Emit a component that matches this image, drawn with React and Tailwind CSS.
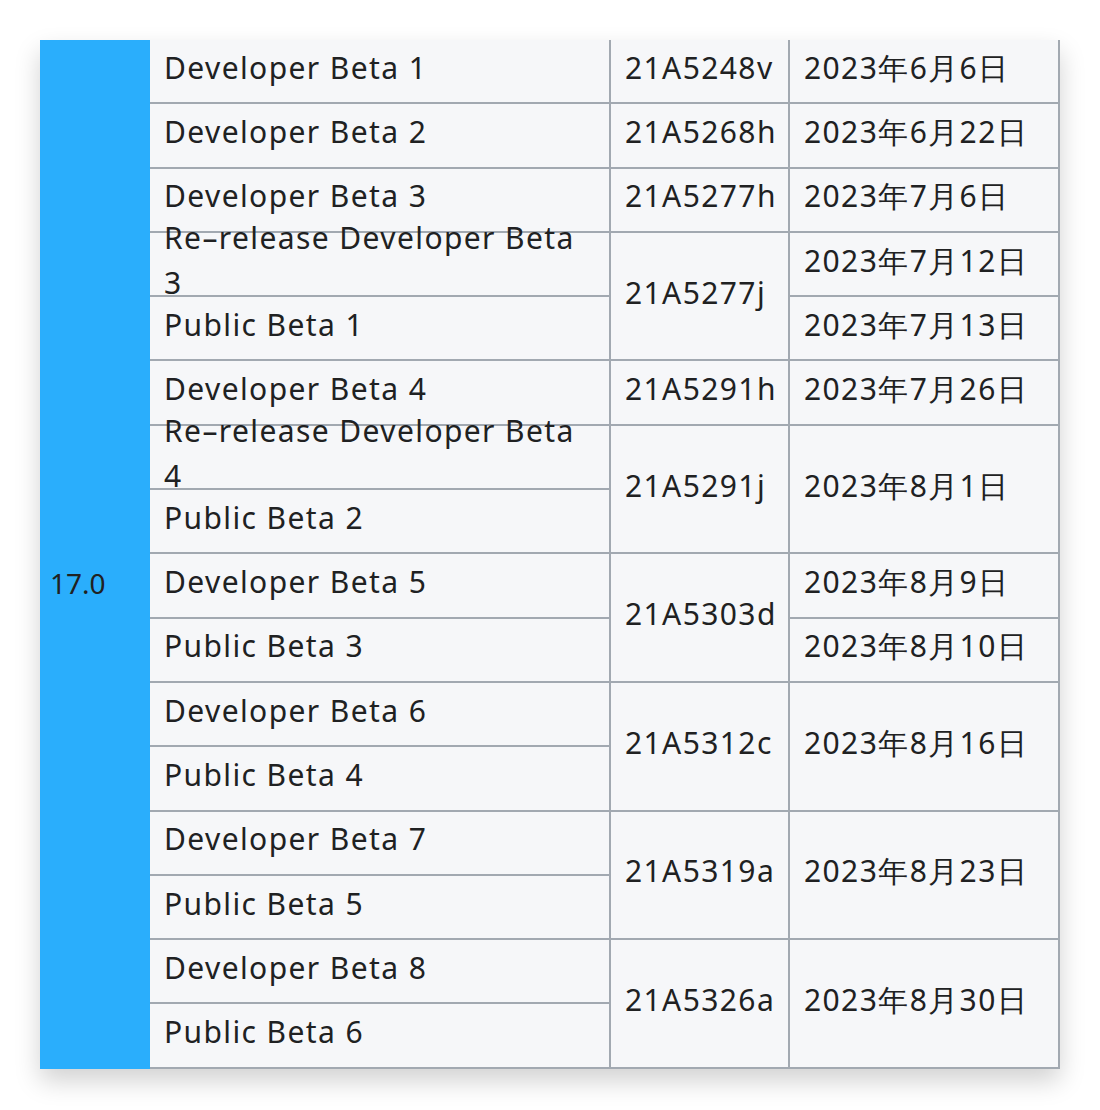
const names = [
  "Developer Beta 1", "Developer Beta 2", "Developer Beta 3",
  "Re–release Developer Beta 3", "Public Beta 1", "Developer Beta 4",
  "Re–release Developer Beta 4", "Public Beta 2", "Developer Beta 5",
  "Public Beta 3", "Developer Beta 6", "Public Beta 4", "Developer Beta 7",
  "Public Beta 5", "Developer Beta 8", "Public Beta 6",
];

const builds = [
  ["21A5248v", 1], ["21A5268h", 1], ["21A5277h", 1], ["21A5277j", 2],
  ["21A5291h", 1], ["21A5291j", 2], ["21A5303d", 2], ["21A5312c", 2],
  ["21A5319a", 2], ["21A5326a", 2],
];

const dates = [
  ["2023年6月6日", 1], ["2023年6月22日", 1], ["2023年7月6日", 1],
  ["2023年7月12日", 1], ["2023年7月13日", 1], ["2023年7月26日", 1],
  ["2023年8月1日", 2], ["2023年8月9日", 1], ["2023年8月10日", 1],
  ["2023年8月16日", 2], ["2023年8月23日", 2], ["2023年8月30日", 2],
];

const cell = "flex items-center px-[14px] pb-[8px] bg-[#f6f7f9] border-b-2 border-r-2 border-[#a2a9b1]";

function spans(list, col) {
  let row = 1;
  return list.map(([text, n]) => {
    const start = row;
    row += n;
    return (
      <div
        key={col + start}
        className={cell}
        style={{ gridColumn: col, gridRow: `${start} / span ${n}` }}
      >
        {text}
      </div>
    );
  });
}

export default function App() {
  return (
    <div className="w-[1100px] h-[1110px] bg-white pt-[40px] pl-[40px] font-['Liberation_Sans',Arial,'Noto_Sans_CJK_SC',sans-serif]">
      <div className="w-[1020px] grid grid-cols-[110px_461px_179px_270px] grid-rows-[repeat(16,64.3px)] text-[30px] tracking-[1.4px] text-[#202122] shadow-[0_12px_24px_rgba(0,0,0,0.18)]">
        <div className="row-start-1 row-span-16 col-start-1 bg-[#2aaefc] flex items-center pl-[10px] pt-[58px] text-[28px] tracking-normal">17.0</div>
        {names.map((n, i) => (
          <div key={i} className={cell} style={{ gridColumn: 2, gridRow: i + 1 }}>{n}</div>
        ))}
        {spans(builds, 3)}
        {spans(dates, 4)}
      </div>
    </div>
  );
}
